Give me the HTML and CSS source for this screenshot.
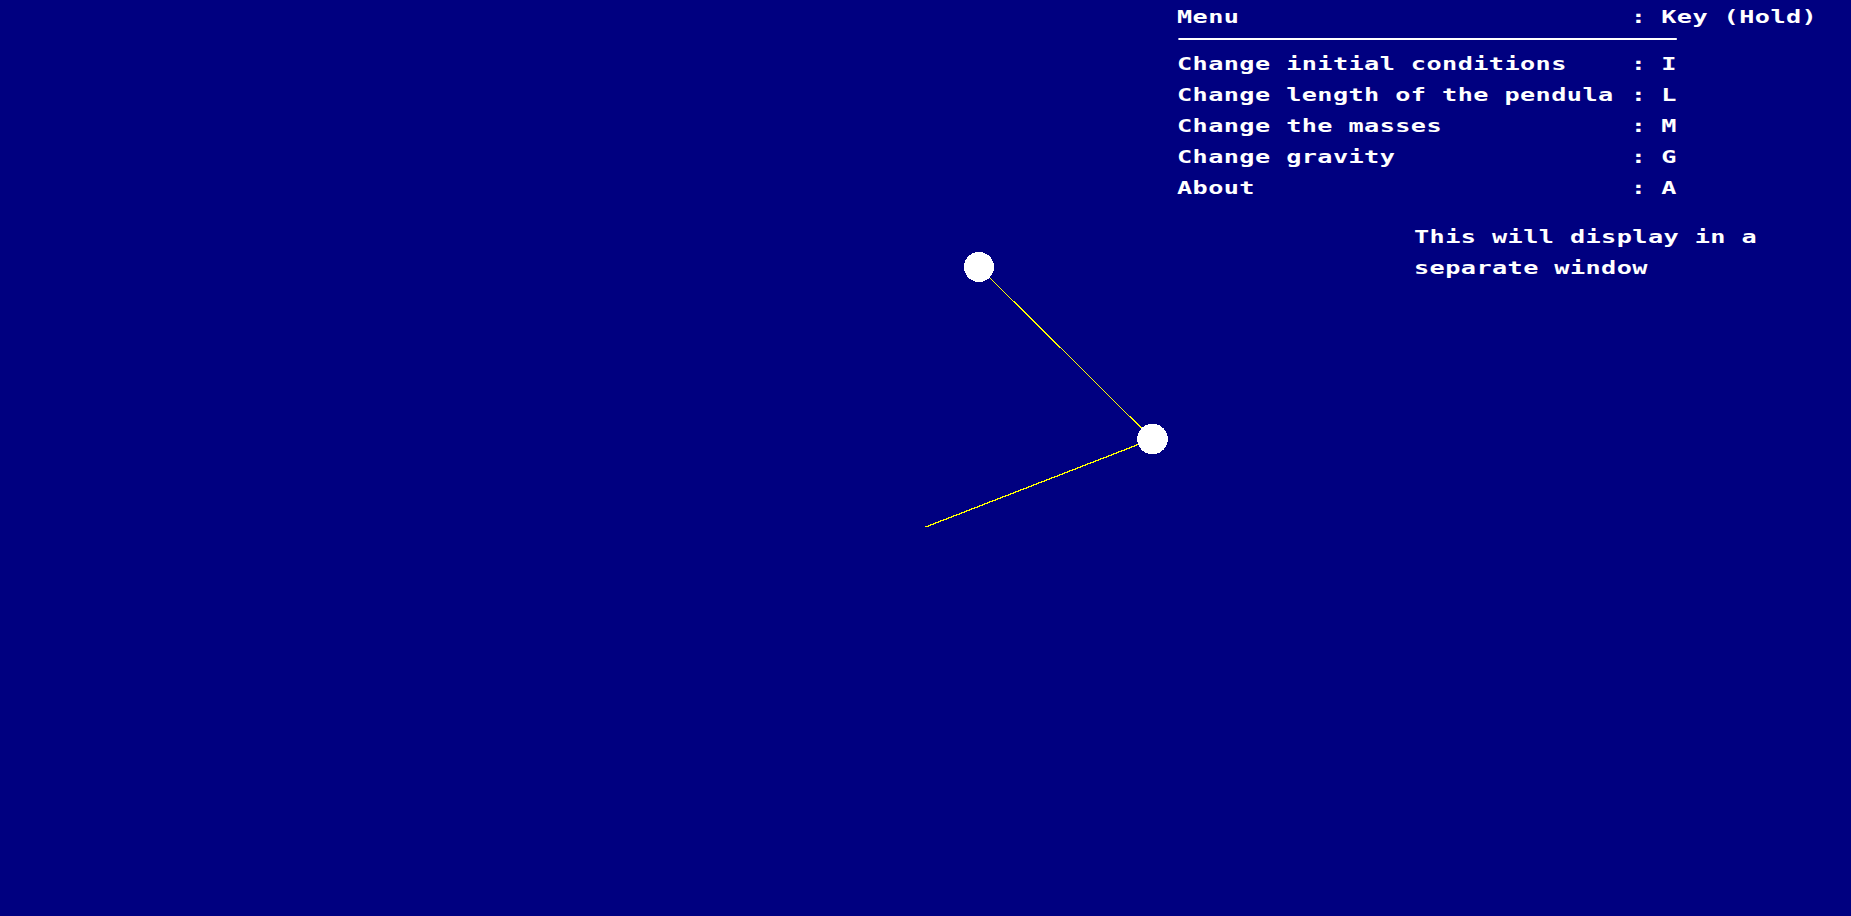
FILE: index.html
```html
<!DOCTYPE html>
<html lang="en">
<head>
<meta charset="utf-8">
<title>Double Pendulum</title>
<link rel="stylesheet" href="styles.css">
</head>
<body>
<div class="page">
  <svg class="scene" width="1851" height="916" viewBox="0 0 1851 916" shape-rendering="crispEdges">
    <line x1="979" y1="267" x2="1152.5" y2="439" stroke="#ffff00" stroke-width="1"/>
    <line x1="1152.5" y1="439" x2="925.5" y2="527" stroke="#ffff00" stroke-width="1.3"/>
    <circle cx="979" cy="267" r="15" fill="#ffffff"/>
    <circle cx="1152.5" cy="439" r="15.3" fill="#ffffff"/>
  </svg>
  <div class="menu">
    <div class="row head"><span class="label">Menu</span><span class="colon">:</span><span class="key">Key (Hold)</span></div>
    <div class="rule"></div>
    <div class="row"><span class="label">Change initial conditions</span><span class="colon">:</span><span class="key">I</span></div>
    <div class="row"><span class="label">Change length of the pendula</span><span class="colon">:</span><span class="key">L</span></div>
    <div class="row"><span class="label">Change the masses</span><span class="colon">:</span><span class="key">M</span></div>
    <div class="row"><span class="label">Change gravity</span><span class="colon">:</span><span class="key">G</span></div>
    <div class="row"><span class="label">About</span><span class="colon">:</span><span class="key">A</span></div>
    <div class="note">
      <div class="note-line">This will display in a</div>
      <div class="note-line">separate window</div>
    </div>
  </div>
</div>
</body>
</html>
```

FILE: styles.css
```css
html, body {
  margin: 0;
  padding: 0;
  background: #000080;
  overflow: hidden;
}

.page {
  position: relative;
  width: 1851px;
  height: 916px;
  display: grid;
  grid-template-columns: 1177px 674px;
}

.scene {
  position: absolute;
  left: 0;
  top: 0;
}

/* wide, blocky pixel-style lettering: a mono face stretched horizontally */
.menu {
  grid-column: 2;
  padding-top: 1.4px;
  color: #ffffff;
  font-family: "DejaVu Sans Mono", "Liberation Mono", monospace;
  font-weight: bold;
  font-size: 18px;
  letter-spacing: 0.3px;
  transform: scaleX(1.4);
  transform-origin: 0 0;
  width: 481px;
}

.row {
  display: grid;
  grid-template-columns: 323.6px 22.3px auto;
  height: 31px;
  line-height: 31px;
  white-space: pre;
}

.colon {
  text-indent: 0.5px;
}

.rule {
  width: 356.4px;
  height: 2px;
  background: #ffffff;
  margin: 5.6px 0 8.4px 0.7px;
}

.note {
  margin-top: 18px;
  margin-left: 169.3px;
}

.note-line {
  height: 31px;
  line-height: 31px;
  white-space: pre;
}
```
